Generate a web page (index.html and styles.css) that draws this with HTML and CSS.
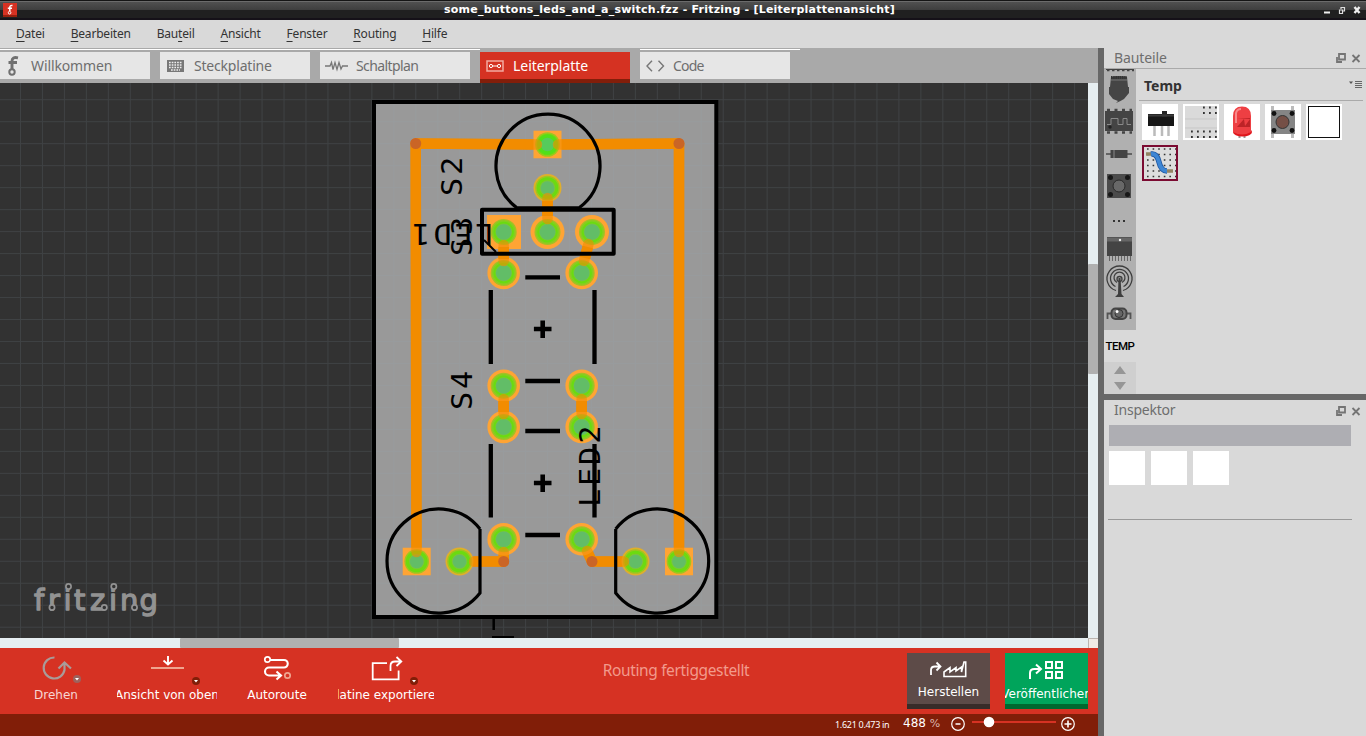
FILE: index.html
```html
<!DOCTYPE html>
<html lang="de">
<head>
<meta charset="utf-8">
<title>Fritzing</title>
<link rel="stylesheet" href="styles.css">
</head>
<body>
<header class="titlebar">
  <svg class="app-icon" viewBox="0 0 14 14"><rect width="14" height="14" fill="#d63223"/><rect y="12" width="14" height="2" fill="#96200f"/><path d="M9.500 2.500Q6.800 2 6.800 4.500V8M4.800 5.200H9" fill="none" stroke="#fff" stroke-width="1.500"/><circle cx="6.600" cy="9.700" r="1.300" fill="none" stroke="#fff"/></svg>
  <span class="title">some_buttons_leds_and_a_switch.fzz - Fritzing - [Leiterplattenansicht]</span>
  <svg class="window-controls" viewBox="0 0 38 10"><path d="M1 7.500H7" stroke="#eee" stroke-width="2"/><path d="M18 4V2.500H21.500V6H19M16.500 5H19.500V8.500H16.500Z" fill="none" stroke="#ddd" stroke-width="1.200"/><path d="M31.500 2L36.500 8M36.500 2L31.500 8" stroke="#eee" stroke-width="2.400"/></svg>
</header>
<nav class="menu">
  <span><u>D</u>atei</span><span><u>B</u>earbeiten</span><span>Bau<u>t</u>eil</span><span><u>A</u>nsicht</span><span><u>F</u>enster</span><span><u>R</u>outing</span><span><u>H</u>ilfe</span>
</nav>
<div class="workspace">
  <main class="editor">
    <div class="tabs">
      <div class="tab"><svg class="tab-icon" viewBox="0 0 24 27"><path d="M18 5.800Q12 4.500 12 9V17M8.500 10.500H17" fill="none" stroke="#707070" stroke-width="2.900"/><circle cx="12" cy="20" r="2.700" fill="none" stroke="#707070" stroke-width="2"/></svg><span>Willkommen</span></div>
      <div class="tab"><svg class="tab-icon" viewBox="0 0 24 27"><rect x="7.500" y="8.500" width="16" height="11" fill="#777" stroke="#777"/><path d="M9 10.500H22.500M9 13H22.500M9 15.500H22.500M11 18H20" stroke="#eee" stroke-width="1.500" stroke-dasharray="1.700 1"/></svg><span class="w-breadboard">Steckplatine</span></div>
      <div class="tab"><svg class="tab-icon" viewBox="0 0 24 27"><path d="M5 14H10L11.500 10.500L13 17.500L15 10.500L17 17.500L19 10.500L21 17L22.500 14H28" fill="none" stroke="#777" stroke-width="1.300"/></svg><span class="w-schematic">Schaltplan</span></div>
      <div class="tab active"><svg class="tab-icon" viewBox="0 0 24 27"><rect x="7" y="9" width="16" height="10" fill="none" stroke="#f2aaa1" stroke-width="1.500"/><circle cx="11" cy="14" r="1.600" fill="none" stroke="#fff"/><circle cx="19" cy="14" r="1.600" fill="none" stroke="#fff"/><path d="M12.800 14H17.200" stroke="#fff"/></svg><span class="w-pcb">Leiterplatte</span></div>
      <div class="tab"><svg class="tab-icon" viewBox="0 0 24 27"><path d="M12 8.800L7 14L12 19.200M18.500 8.800L23.500 14L18.500 19.200" fill="none" stroke="#777" stroke-width="1.400"/></svg><span class="w-code">Code</span></div>
    </div>
    <div class="view">
      <svg class="canvas" viewBox="0 83 1088 555">
        <defs>
          <pattern id="grid" x="20" y="99.200" width="21.960" height="21.980" patternUnits="userSpaceOnUse"><path d="M.5 0V22M0 .5H22" stroke="#91a9ba" stroke-opacity=".13" stroke-width="1"/></pattern>
          <g id="rings"><circle r="13" fill="#a5bf25"/><circle r="11.700" fill="#83cf20"/><circle r="10.300" fill="#69dc10"/><circle r="8.400" fill="#7bc63b"/><circle r="7.800" fill="#62bd67"/></g>
          <g id="pad"><circle r="16.300" fill="#ffa434"/><use href="#rings"/></g>
          <g id="hpad"><circle r="17" fill="#ffa434"/><use href="#rings"/></g>
          <g id="spad"><circle r="14" fill="#e0ae2c"/><circle r="12.300" fill="#9fc51f"/><circle r="10.800" fill="#6bdb10"/><circle r="7.800" fill="#7bc63b"/><circle r="6.800" fill="#62bd67"/></g>
          <g id="sqpad"><rect x="-14" y="-13.800" width="28" height="27.600" fill="#ffa434"/><circle r="12.300" fill="#9fc51f"/><circle r="10.800" fill="#6bdb10"/><circle r="7.800" fill="#7bc63b"/><circle r="6.800" fill="#62bd67"/></g>
          <g id="traces"><path d="M416.500 552L415.700 143.500L537 144.500M558 144.500L679 143.500V552M547.500 198V219M503.700 245V261M588.500 244L584 261M503.700 399V414M581.700 399V414M503.700 552V561.500H474M587 551L592 561.500H624"/></g>
        </defs>
        <rect y="83" width="1088" height="555" fill="#323232"/>
        <rect x="374" y="102" width="342.300" height="515" fill="#999"/>
        <rect y="83" width="1088" height="555" fill="url(#grid)"/>
        <rect x="374" y="102" width="342.300" height="515" fill="none" stroke="#000" stroke-width="4"/>
        <use href="#traces" class="trace"/>
        <use href="#sqpad" x="547.500" y="144.500"/><circle cx="547.500" cy="144.500" r="10" fill="#50e01a"/><circle cx="547.500" cy="144.500" r="6.800" fill="#55cb5c"/>
        <use href="#spad" x="547.500" y="188"/>
        <rect x="487" y="215" width="34" height="34" fill="#ffa434"/><use href="#rings" x="503.700" y="232"/>
        <use href="#hpad" x="547.500" y="232"/><use href="#hpad" x="592" y="232"/>
        <use href="#pad" x="503.700" y="273"/><use href="#pad" x="581.700" y="273"/>
        <use href="#pad" x="503.700" y="385.700"/><use href="#pad" x="581.700" y="385.700"/>
        <use href="#pad" x="503.700" y="427"/><use href="#pad" x="581.700" y="427"/>
        <use href="#pad" x="503.700" y="539.300"/><use href="#pad" x="581.700" y="539.300"/>
        <use href="#sqpad" x="416.700" y="561.500"/><use href="#spad" x="459.500" y="561.500"/>
        <use href="#spad" x="635.500" y="561.500"/><use href="#sqpad" x="679" y="561.500"/>
        <use href="#traces" class="trace over"/>
        <path d="M503.700 247V259M587.800 247L585 258M503.700 401V412M581.700 401V412M547.500 201V216" class="trace butt"/>
        <g fill="#ca6526"><circle cx="415.700" cy="143.500" r="5.500"/><circle cx="679" cy="143.500" r="5.500"/><circle cx="503.700" cy="561.500" r="5.500"/><circle cx="592" cy="561.500" r="5.500"/></g>
        <g class="silk">
          <path d="M516.500 207.500A52 52 0 1 1 579.500 207.500M480 529V593A52 52 0 1 1 480 529M615.700 529V593A52 52 0 1 0 615.700 529" stroke-width="3.200"/>
          <path d="M516 208.200H580" stroke-width="4"/>
          <rect x="482" y="209.700" width="131.700" height="44" stroke-width="4" stroke-linejoin="round"/>
          <path d="M484 240L496 252" stroke-width="2"/>
          <path d="M525.300 277.300H560M525.300 381H560M525.300 431H560M525.300 535H560M490.800 290V364M594.500 290V364M490.800 444V517.500M594.500 444V517.500" stroke-width="4.300"/>
          <path d="M533.900 329H551.500M542.700 320.500V338M533.900 483H551.500M542.700 474.500V492" stroke-width="4.600"/>
          <path d="M493.700 619V630M492 637.200H514" stroke-width="2.500"/>
        </g>
        <g class="label">
          <text transform="translate(462 196) rotate(-90) scale(1.100 1)">S2</text>
          <text transform="translate(472 256) rotate(-90) scale(1.100 1)">S3</text>
          <text transform="translate(472 410) rotate(-90) scale(1.100 1)">S4</text>
          <text transform="translate(600 507) rotate(-90) scale(1.100 1)">LED2</text>
          <text transform="translate(493.500 224) rotate(180) scale(1.100 1)">LED1</text>
        </g>
        <text class="logo" x="34 48 63.500 74 90 109 120 139.500" y="610">fritzing</text>
        <g fill="#323232" stroke="#929292" stroke-width="1.700"><circle cx="68.500" cy="586.500" r="2.600"/><circle cx="52" cy="607.500" r="2.600"/><circle cx="104.300" cy="607.500" r="2.600"/><circle cx="113.800" cy="586.500" r="2.600"/><circle cx="134.500" cy="607.500" r="2.600"/></g>
      </svg>
      <div class="vscroll"><div class="vthumb"></div></div>
    </div>
    <div class="hscroll"><div class="hthumb"></div><div class="corner"></div></div>
    <div class="toolbar">
      <div class="tool rotate"><svg viewBox="0 0 40 30"><path d="M18.500 1.500A10.500 10.500 0 1 0 28.500 14V7M22.500 12.500L28.500 6.500L35 12.500" fill="none" stroke="#a99b99" stroke-width="2.200"/><circle cx="41" cy="23" r="4" fill="#9d625d"/><path d="M39 22H43L41 24.500Z" fill="#fff"/></svg><span class="tl">Drehen</span></div>
      <div class="tool viewfrom"><svg viewBox="0 0 40 30"><path d="M22 0V8M17.500 4.500L22 8.500L26.500 4.500" fill="none" stroke="#fff" stroke-width="1.900"/><path d="M5 12H38" stroke="#efa48f" stroke-width="2"/><circle cx="50" cy="25" r="4" fill="#811e08"/><path d="M48 24H52L50 26.500Z" fill="#fff"/></svg><span class="tl">Ansicht von oben</span></div>
      <div class="tool autoroute"><svg viewBox="-3 0 40 30"><path d="M10 4H24A3.700 3.700 0 0 1 24 11.500H9A4 4 0 0 0 9 19.500H20M16.500 15.500L21 19.500L16.500 23.500" fill="none" stroke="#fff" stroke-width="2.100"/><circle cx="7.500" cy="3.500" r="2.700" fill="#d63223" stroke="#fff" stroke-width="1.700"/><circle cx="27.500" cy="19.500" r="2.700" fill="none" stroke="#efa48f" stroke-width="1.700"/></svg><span class="tl">Autoroute</span></div>
      <div class="tool export"><svg viewBox="0 0 40 30"><path d="M21 7.200H6.700V23.300H32.600V14.500M24.500 15V10Q24.500 5.500 29 5.500H34M30.500 1L35.300 5.500L30.500 10" fill="none" stroke="#fff" stroke-width="1.800"/><circle cx="48" cy="25" r="4" fill="#811e08"/><path d="M46 24H50L48 26.500Z" fill="#fff"/></svg><span class="tl">Platine exportieren</span></div>
      <div class="routing">Routing fertiggestellt</div>
      <div class="button make"><svg viewBox="0 -2 83 31"><path d="M24 20V15Q24 11.500 28 11.500H33M29.500 7.500L33.500 11.500L29.500 15.500" fill="none" stroke="#fff" stroke-width="1.800"/><path d="M37 21.500V17L43 12.500V17L49 12.500V16L54.500 12V17L57 7H58.700V21.500Z" fill="none" stroke="#fff" stroke-width="1.600"/></svg><span>Herstellen</span></div>
      <div class="button publish"><svg viewBox="0 -2 83 31"><path d="M25 24V18Q25 14 29.500 14H35M31 9.500L36 14L31 18.500" fill="none" stroke="#fff" stroke-width="2"/><path d="M41 7H47V13H41ZM51 7H57V13H51ZM41 17H47V23H41ZM51 17H57V23H51Z" fill="none" stroke="#fff" stroke-width="2"/></svg><span>Veröffentlichen</span></div>
    </div>
    <div class="status">
      <span class="coords">1.621 0.473 in</span><span class="zoom">488 <small>%</small></span>
      <svg class="slider" viewBox="0 0 130 22"><g fill="none" stroke="#fff" stroke-width="1.200"><circle cx="8" cy="10" r="6.300"/><circle cx="118" cy="10" r="6.300"/></g><path d="M5.500 10H10.500M114.500 10H121.500M118 6.500V13.500" stroke="#fff" stroke-width="1.600"/><path d="M22 8H106" stroke="#d63223" stroke-width="2"/><circle cx="39" cy="8" r="5.300" fill="#fff"/></svg>
    </div>
  </main>
  <aside class="side">
    <section class="parts">
      <div class="panel-head"><h2 class="parts-title">Bauteile</h2><svg viewBox="0 0 26 10"><path d="M4 1H10V6.500H4ZM2 4V9H7" fill="none" stroke="#747474" stroke-width="1.800"/><path d="M17.500 2L24.500 9M24.500 2L17.500 9" stroke="#747474" stroke-width="1.800"/></svg></div>
      <div class="parts-body">
        <div class="bins">
          <svg class="bin-icons" viewBox="1104 69 32 261">
            <path d="M1106 69.500H1134" stroke="#444" stroke-width="1"/><path d="M1107 70H1134" stroke="#444" stroke-width="2.500" stroke-dasharray="2.500 2.500"/>
            <path d="M1111 77Q1119 75 1127 77L1128 87H1129V93L1124 99Q1121 101 1116 103L1118 101L1113 99L1109 94V87H1110Z" fill="#454545"/><path d="M1111 77.500H1127" stroke="#333" stroke-width="3" stroke-dasharray="1.500 .7"/><path d="M1111 80H1127" stroke="#777"/>
            <rect x="1105" y="111" width="28" height="20" fill="#444"/><path d="M1107 110H1132M1107 132.500H1132" stroke="#444" stroke-width="2.500" stroke-dasharray="3 4.500"/><path d="M1107 124.500H1111V118.500H1118V124.500H1123V118.500H1127V124.500H1131" fill="none" stroke="#8a8a8a"/><circle cx="1110" cy="127" r="1.700" fill="#222"/>
            <path d="M1106 154H1132" stroke="#555" stroke-width="1.700"/><rect x="1110.500" y="150" width="17" height="8" fill="#444"/><path d="M1114 150V158" stroke="#888"/>
            <rect x="1107" y="174" width="24" height="24" fill="#4b4b4b"/><g fill="#171717"><circle cx="1110.500" cy="177.500" r="2.500"/><circle cx="1127.500" cy="177.500" r="2.500"/><circle cx="1110.500" cy="194.500" r="2.500"/><circle cx="1127.500" cy="194.500" r="2.500"/></g><circle cx="1119" cy="186" r="6" fill="#686868" stroke="#292929"/>
            <path d="M1113 221H1115M1118 221H1120M1123 221H1125" stroke="#333" stroke-width="2"/>
            <rect x="1107" y="237" width="25" height="19" fill="#444"/><path d="M1107 239.500H1132" stroke="#666" stroke-width="4"/><circle cx="1120" cy="240" r="1.200" fill="#eee"/><path d="M1109 258.500H1131" stroke="#666" stroke-width="5" stroke-dasharray="1 2"/>
            <g fill="none" stroke="#3e3e3e" stroke-width="1.300"><path d="M1116 290.500A12.500 12.500 0 1 1 1123 290.500M1115.500 286.500A9 9 0 1 1 1123.500 286.500M1117 282.500A5.500 5.500 0 1 1 1122 282.500"/><circle cx="1119.500" cy="279" r="2.500"/></g><path d="M1118.500 278H1120.500L1121.500 294L1124 297H1115L1118 294Z" fill="#3e3e3e"/>
            <path d="M1107.500 319V313.500H1112M1126 313.500H1130.500V319" fill="none" stroke="#555" stroke-width="1.800"/><rect x="1111.500" y="308.500" width="15" height="10.500" rx="4" fill="#777" stroke="#444" stroke-width="2"/><circle cx="1119" cy="313.500" r="4" fill="#666" stroke="#333"/><circle cx="1117" cy="311.500" r="1.500" fill="#fff"/>
          </svg>
          <div class="bin-selected">TEMP</div>
          <svg class="bin-scroll" viewBox="0 0 32 32"><path d="M10 12L16 4L22 12ZM10 20L16 28L22 20Z" fill="#969696"/></svg>
        </div>
        <div class="bin-content">
          <div class="bin-title"><h3>Temp</h3><svg viewBox="0 0 14 9"><path d="M0 1.500H4L2 4Z" fill="#555"/><path d="M6 1.500H13M6 3.500H13M6 5.500H13M6 7.500H13" stroke="#666"/></svg></div>
          <div class="part-grid">
            <svg class="part" viewBox="0 0 36 36"><path d="M12.500 22V32M20 22V32M26.500 22V32" stroke="#bbb" stroke-width="2.500"/><rect x="6" y="10" width="26" height="12" fill="#161616"/><rect x="20" y="7" width="5" height="6" fill="#262626"/><path d="M6 11.500H32" stroke="#3a3a3a" stroke-width="2"/></svg>
            <svg class="part" viewBox="0 0 36 36"><rect x="2" y="2" width="32" height="32" fill="#dadada"/><path d="M2 15H34M2 24H34" stroke="#c7c7c7"/><path d="M20 3.500H34M20 9H34M8 27.500H34M8 33H34" stroke="#333" stroke-width="1.800" stroke-dasharray="1.800 4.200"/></svg>
            <svg class="part" viewBox="0 0 36 36"><path d="M15.500 31V34M20.500 31V34" stroke="#999" stroke-width="2"/><ellipse cx="18.500" cy="28" rx="9.500" ry="4.500" fill="#e0161c"/><path d="M9 28V12Q9 2.500 18 2.500T27 12V28Q18 33 9 28Z" fill="#ee3f43"/><path d="M13 14H26V23H13L20 15L21 22L26 15" fill="#bd2327"/><path d="M12 19V9Q13 5 17 5" fill="none" stroke="#f8898a" stroke-width="2"/></svg>
            <svg class="part" viewBox="0 0 36 36"><path d="M7.500 2V34M27.500 2V34" stroke="#bbb" stroke-width="3"/><rect x="6" y="6" width="24" height="24" fill="#858585"/><g fill="#111"><circle cx="9" cy="9.500" r="2.400"/><circle cx="27" cy="9.500" r="2.400"/><circle cx="9" cy="26.500" r="2.400"/><circle cx="27" cy="26.500" r="2.400"/></g><circle cx="17.500" cy="18" r="6.500" fill="#754f46" stroke="#353535"/></svg>
            <svg class="part" viewBox="0 0 36 36"><rect x="2.500" y="2.500" width="31" height="31" fill="#fff" stroke="#111"/></svg>
            <svg class="part chosen" viewBox="0 0 36 36"><rect width="36" height="36" fill="#ddd"/><path d="M5 4H34M5 9.500H34M5 15H34M5 20.500H34M5 26H34M5 31.500H34" stroke="#333" stroke-width="1.600" stroke-dasharray="1.600 4"/><path d="M4 9H10M24 26H31" stroke="#928363" stroke-width="3.500"/><path d="M9 9Q15 8 17 17T25 26" fill="none" stroke="#1c55a1" stroke-width="5.500"/><path d="M9 9Q15 8 17 17T25 26" fill="none" stroke="#3e86d4" stroke-width="3.800"/><rect x="1" y="1" width="34" height="34" fill="none" stroke="#7b0b32" stroke-width="2"/></svg>
          </div>
        </div>
      </div>
    </section>
    <section class="inspector">
      <div class="panel-head"><h2 class="insp-title">Inspektor</h2><svg viewBox="0 0 26 10"><path d="M4 1H10V6.500H4ZM2 4V9H7" fill="none" stroke="#747474" stroke-width="1.800"/><path d="M17.500 2L24.500 9M24.500 2L17.500 9" stroke="#747474" stroke-width="1.800"/></svg></div>
      <div class="name-bar"></div>
      <div class="thumbs"><i></i><i></i><i></i></div>
      <div class="rule"></div>
    </section>
  </aside>
</div>
</body>
</html>
```
FILE: styles.css
```css
* { box-sizing: border-box; }
body { margin: 0; width: 1366px; height: 736px; overflow: hidden; display: flex; flex-direction: column; background: #d9d9d9; font-family: "Noto Sans", "Open Sans", sans-serif; color: #333; }
svg { display: block; }
.titlebar { height: 20px; flex: none; display: flex; align-items: center; background: linear-gradient(#151515 0 1px, #6b6b6b 1px 2px, #505050 2px, #3e3e3e 10px, #202020 10px, #202020 18px, #151118 18px); padding: 0 5px 0 3px; }
.app-icon { width: 14px; height: 14px; }
.title { flex: 1; padding-right: 1px; text-align: center; color: #fff; font: bold 11px/18px "DejaVu Sans", sans-serif; letter-spacing: .23px; }
.window-controls { width: 38px; height: 10px; overflow: visible; }
.menu { height: 28px; flex: none; display: flex; gap: 25.900px; padding-left: 16px; font-size: 12px; line-height: 28px; letter-spacing: -.19px; background: #d9d9d9; }
.menu u { text-underline-offset: 3px; text-decoration-thickness: 1px; text-decoration-skip-ink: none; }
.workspace { flex: 1; display: flex; min-height: 0; }
.editor { width: 1098px; display: flex; flex-direction: column; }
.tabs { height: 35px; flex: none; display: flex; gap: 10px; padding-top: 4px; background: linear-gradient(90deg, #fff 480px, transparent 480px 640px, #fff 640px 800px, transparent 800px) 0 1px / 100% 1px no-repeat, #a9a9a9; }
.tab { width: 150px; height: 27px; display: flex; background: #e6e6e6; color: #6e6e6e; font-size: 14px; line-height: 27px; letter-spacing: -.12px; }
.tab-icon { width: 24px; height: 27px; overflow: visible; margin-right: 7px; }
.active { height: 31px; background: #d53222; border-bottom: 4px solid #831e0a; color: #fff; }
.w-breadboard { padding-left: 3px; letter-spacing: -.2px; }
.w-schematic { padding-left: 5px; letter-spacing: -.6px; }
.w-pcb { padding-left: 2px; letter-spacing: -.05px; }
.w-code { padding-left: 2px; letter-spacing: -.8px; }
.view { height: 555px; display: flex; }
.canvas { width: 1088px; height: 555px; }
.trace { fill: none; stroke: #f28c00; stroke-width: 10.500px; stroke-linecap: round; stroke-linejoin: round; }
.over { opacity: .6; }
.butt { stroke-linecap: butt; }
.silk { fill: none; stroke: #000; }
.label { fill: #000; font: 27.500px "DejaVu Sans Mono", monospace; letter-spacing: 2.600px; }
.logo { font: 29px "DejaVu Sans", sans-serif; fill: #929292; stroke: #929292; stroke-width: 1.300px; stroke-linejoin: round; }
.vscroll { width: 10px; padding-top: 181px; background: #e6eef1; }
.vthumb { height: 110px; background: #b0b0b0; border-radius: 1px; }
.hscroll { height: 10px; flex: none; display: flex; padding-left: 180px; background: #e6eef1; }
.hthumb { width: 219px; background: #b0b0b0; border-radius: 1px; }
.corner { width: 10px; margin-left: auto; background: #f0ebe6; border: solid #bbb5b0; border-width: 1px 0 0 1px; }
.toolbar { height: 66px; flex: none; display: flex; background: #d63223; color: #fff; }
.tool { flex: none; display: flex; flex-direction: column; align-items: center; padding-top: 8px; font: 12px/18px "DejaVu Sans", sans-serif; }
.tool svg { width: 40px; height: 30px; overflow: visible; }
.tl { display: flex; justify-content: center; width: 100%; overflow: hidden; white-space: nowrap; }
.rotate { width: 72px; margin-left: 20px; color: #f7d6d3; }
.viewfrom { width: 100px; margin-left: 25px; }
.viewfrom svg { margin-left: -2px; }
.autoroute { width: 80px; margin-left: 20px; }
.export { width: 96px; margin-left: 21px; }
.routing { width: 473px; text-align: center; padding-left: 11px; line-height: 45px; font-size: 15.500px; letter-spacing: -.36px; color: #f29a8c; }
.button { width: 83px; height: 56px; flex: none; margin-top: 5px; display: flex; flex-direction: column; align-items: center; overflow: hidden; white-space: nowrap; font: 12px/16px "DejaVu Sans", sans-serif; }
.button svg { width: 83px; height: 31px; flex: none; }
.make { background: #5d4b48; border-bottom: 5px solid #382c29; }
.publish { background: #00a45b; border-bottom: 5px solid #00682f; margin-left: 15px; }
.publish span { padding-top: 2px; }
.status { height: 22px; flex: none; display: flex; background: #811e08; color: #fff; padding-left: 835px; }
.coords { width: 68px; font-size: 9px; line-height: 21px; letter-spacing: -.3px; white-space: nowrap; }
.zoom { width: 47px; font: 12px/18px "DejaVu Sans", sans-serif; white-space: nowrap; }
.zoom small { font-size: 11px; color: #dcb7af; }
.slider { width: 130px; height: 22px; }
.side { width: 268px; border-left: 6px solid #676767; display: flex; flex-direction: column; }
.parts { height: 346px; flex: none; }
.panel-head { height: 21px; display: flex; justify-content: space-between; align-items: center; padding: 0 5px 0 10px; }
.panel-head h2 { margin: 0; font-size: 14px; font-weight: 400; line-height: 20px; letter-spacing: -.1px; color: #6e6e6e; }
.panel-head .insp-title { padding-bottom: 2px; letter-spacing: -.22px; }
.panel-head svg { width: 26px; height: 10px; }
.parts .panel-head { border-bottom: 1px solid #aaa; }
.parts-body { display: flex; height: 325px; }
.bins { width: 32px; }
.bin-icons { width: 32px; height: 261px; background: #b0b0b0; }
.bin-selected { height: 32px; color: #000; font: 500 11.500px/33px Roboto, sans-serif; text-align: center; letter-spacing: -.5px; }
.bin-scroll { width: 32px; height: 32px; background: #cfcfcf; }
.bin-content { flex: 1; padding: 0 3px; }
.bin-title { height: 32px; display: flex; justify-content: space-between; align-items: center; padding-left: 5px; border-bottom: 1px solid #aaa; }
.bin-title h3 { margin: 0; padding-top: 1px; font-size: 14px; }
.bin-title svg { width: 14px; height: 9px; }
.part-grid { display: grid; grid-template-columns: repeat(5, 36px); gap: 5px; padding: 3px; }
.part { width: 36px; height: 36px; background: #fff; }
.inspector { border-top: 6px solid #676767; flex: 1; }
.name-bar { width: 242px; height: 21px; margin: 4px 0 5px 5px; background: #aeaeb3; }
.thumbs { display: flex; gap: 6px; padding-left: 5px; }
.thumbs i { width: 36px; height: 34px; background: #fff; }
.rule { width: 244px; height: 1px; margin: 34px 0 0 4px; background: #999; }
```
